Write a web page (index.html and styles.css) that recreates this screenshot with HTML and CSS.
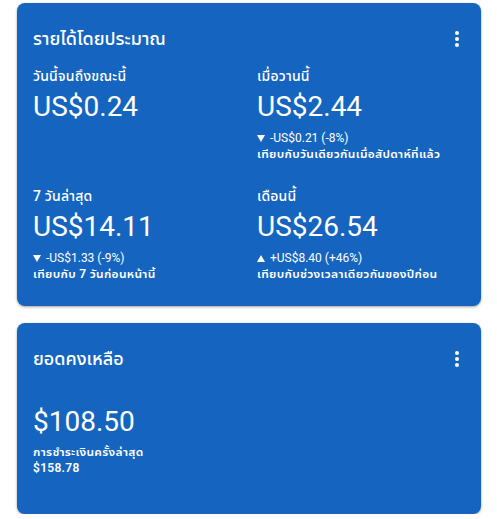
FILE: index.html
```html
<!DOCTYPE html>
<html lang="th">
<head>
<meta charset="utf-8">
<link rel="stylesheet" href="styles.css">
</head>
<body>
<div class="page">
  <section class="card card-earnings">
    <header class="card-head">
      <h2 class="card-title">รายได้โดยประมาณ</h2>
      <svg class="kebab" width="24" height="24" viewBox="0 0 24 24"><circle cx="12" cy="6" r="2" fill="#fff"/><circle cx="12" cy="12" r="2" fill="#fff"/><circle cx="12" cy="18" r="2" fill="#fff"/></svg>
    </header>
    <div class="grid">
      <div class="stat">
        <div class="label">วันนี้จนถึงขณะนี้</div>
        <div class="amount">US$0.24</div>
      </div>
      <div class="stat">
        <div class="label">เมื่อวานนี้</div>
        <div class="amount">US$2.44</div>
        <div class="change"><svg class="tri" width="8" height="7" viewBox="0 0 8 7"><path d="M0 0H8L4 7Z" fill="#fff"/></svg>-US$0.21 (-8%)</div>
        <div class="compare">เทียบกับวันเดียวกันเมื่อสัปดาห์ที่แล้ว</div>
      </div>
      <div class="stat">
        <div class="label">7 วันล่าสุด</div>
        <div class="amount">US$14.11</div>
        <div class="change"><svg class="tri" width="8" height="7" viewBox="0 0 8 7"><path d="M0 0H8L4 7Z" fill="#fff"/></svg>-US$1.33 (-9%)</div>
        <div class="compare">เทียบกับ 7 วันก่อนหน้านี้</div>
      </div>
      <div class="stat">
        <div class="label">เดือนนี้</div>
        <div class="amount">US$26.54</div>
        <div class="change"><svg class="tri" width="8" height="7" viewBox="0 0 8 7"><path d="M0 7H8L4 0Z" fill="#fff"/></svg>+US$8.40 (+46%)</div>
        <div class="compare">เทียบกับช่วงเวลาเดียวกันของปีก่อน</div>
      </div>
    </div>
  </section>
  <section class="card card-balance">
    <header class="card-head">
      <h2 class="card-title">ยอดคงเหลือ</h2>
      <svg class="kebab" width="24" height="24" viewBox="0 0 24 24"><circle cx="12" cy="6" r="2" fill="#fff"/><circle cx="12" cy="12" r="2" fill="#fff"/><circle cx="12" cy="18" r="2" fill="#fff"/></svg>
    </header>
    <div class="balance">
      <div class="amount">$108.50</div>
      <div class="compare">การชำระเงินครั้งล่าสุด</div>
      <div class="compare">$158.78</div>
    </div>
  </section>
</div>
</body>
</html>
```
FILE: styles.css
```css
* { box-sizing: border-box; }
html, body { margin: 0; padding: 0; background: #ffffff; }
body {
  font-family: Roboto, "Noto Sans Thai UI", "Noto Sans Thai", sans-serif;
  color: #ffffff;
}
.page {
  padding: 3px 0 0 17px;
  width: 481px;
  display: flex;
  flex-direction: column;
  gap: 17px;
}
.card {
  background: #1565c0;
  border-radius: 8px;
  box-shadow: 0 1px 3px rgba(0,0,0,0.28), 0 1px 2px rgba(0,0,0,0.12);
  padding: 24px 16px 24px 16px;
}
.card-earnings { height: 303px; }
.card-balance { height: 191px; }
.card-head {
  display: flex;
  align-items: center;
  justify-content: space-between;
  height: 24px;
}
.card-title {
  margin: 0;
  font-size: 18px;
  font-weight: 500;
  line-height: 24px;
}
.kebab { margin-right: -4px; display: block; }
.grid {
  display: grid;
  grid-template-columns: 1fr 1fr;
  column-gap: 16px;
  row-gap: 24px;
  margin-top: 15px;
}
.stat { display: flex; flex-direction: column; }
.label {
  font-size: 14px;
  font-weight: 500;
  line-height: 20px;
  letter-spacing: 0.2px;
}
.amount {
  font-size: 28px;
  font-weight: 400;
  line-height: 36px;
  margin-top: 3px;
}
.change {
  font-size: 12px;
  line-height: 16px;
  margin-top: 5px;
  display: flex;
  align-items: center;
}
.tri { margin-right: 5px; display: block; }
.compare {
  font-size: 12px;
  font-weight: 600;
  line-height: 16px;
  letter-spacing: 0.3px;
}
.balance { margin-top: 33px; display: flex; flex-direction: column; }
.balance .amount { margin-top: 0; margin-bottom: 4px; }
```
